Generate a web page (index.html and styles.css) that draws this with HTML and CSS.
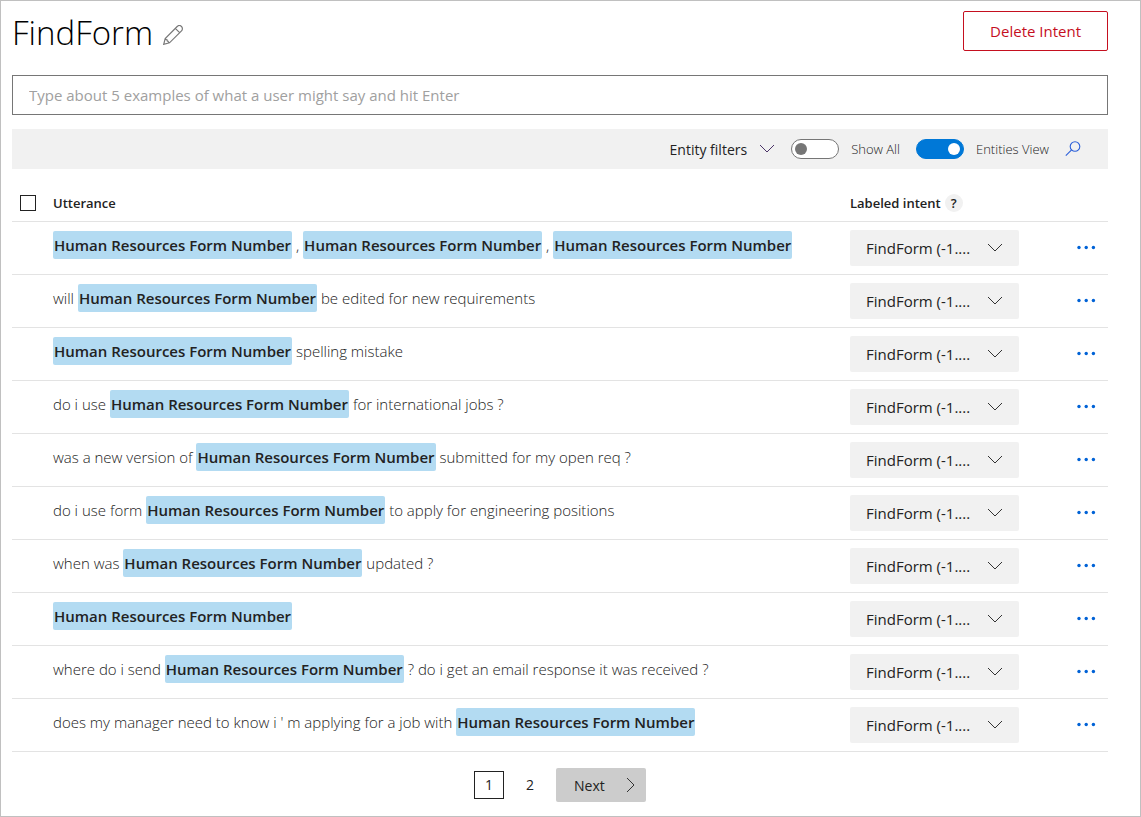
FILE: index.html
```html
<!DOCTYPE html>
<html lang="en">
<head>
<meta charset="utf-8">
<title>FindForm</title>
<link rel="stylesheet" href="styles.css">
</head>
<body>
<svg class="sprite" aria-hidden="true">
  <symbol id="chevron" viewBox="0 0 16 16"><path d="M1 4 8 11 15 4"/></symbol>
  <symbol id="dots" viewBox="0 0 20 6"><circle cx="2" cy="2.500" r="1.700"/><circle cx="9.200" cy="2.500" r="1.700"/><circle cx="16.400" cy="2.500" r="1.700"/></symbol>
</svg>
<main class="page">
  <header class="header">
    <h1 class="title">FindForm</h1>
    <button class="icon-button" type="button" aria-label="Rename intent">
      <svg class="pencil" viewBox="0 0 20 20"><path d="M.7 19.300 2.200 13.500 14.200 1.500A2.600 2.600 0 0 1 18.500 5.800L6.500 17.800ZM2.200 13.500 Q3 15 4 14.900 Q4 16.300 5.100 16.300 Q5.200 17.500 6.500 17.800M12.300 3.400 16.600 7.700"/></svg>
    </button>
    <button class="delete" type="button">Delete Intent</button>
  </header>
  <input class="example" type="text" aria-label="Example utterance" placeholder="Type about 5 examples of what a user might say and hit Enter">
  <div class="toolbar">
    <button class="filters" type="button">Entity filters <svg class="chevron chevron-purple"><use href="#chevron"/></svg></button>
    <label class="switch"><input class="toggle" type="checkbox">Show All</label>
    <label class="switch"><input class="toggle" type="checkbox" checked>Entities View</label>
    <button class="icon-button" type="button" aria-label="Search">
      <svg class="search" viewBox="0 0 16 16"><circle cx="10" cy="5.500" r="4.800"/><path d="M6.600 8.900.8 14.700"/></svg>
    </button>
  </div>
  <table class="utterances">
    <thead>
      <tr>
        <th class="col-check"><input class="check" type="checkbox" aria-label="Select all utterances"></th>
        <th class="col-utterance">Utterance</th>
        <th class="col-intent"><span class="intent-head">Labeled intent <button class="help" type="button">?</button></span></th>
        <th class="col-more"></th>
      </tr>
    </thead>
    <tbody id="rows"></tbody>
  </table>
  <nav class="pager" aria-label="Pages">
    <a class="page-link current" href="#1" aria-current="page">1</a>
    <a class="page-link" href="#2">2</a>
    <button class="next" type="button">Next <svg class="chevron chevron-right"><use href="#chevron"/></svg></button>
  </nav>
</main>
<script src="rows.js"></script>
</body>
</html>
```
FILE: styles.css
```css
* { box-sizing: border-box; }
body { margin: 0; font-family: "Open Sans", "Noto Sans", sans-serif; font-size: 15px; color: #222; background: #fff; }
button, input, select { font: inherit; color: inherit; margin: 0; }
button { background: none; border: 0; padding: 0; cursor: pointer; }
.sprite { display: none; }
.page { min-height: 100vh; border: 1px solid #c0c0c0; padding: 10px 32px 14px 11px; }
.header { display: flex; align-items: center; gap: 10px; }
.title { margin: 0; padding-top: 4px; font-size: 33px; line-height: 36px; font-weight: 300; color: #000; }
.icon-button { display: flex; }
.header .icon-button { padding-top: 8px; }
.pencil { width: 20px; height: 20px; fill: none; stroke: #777; stroke-width: 1.2; }
.delete { margin-left: auto; height: 40px; padding: 0 26px; border: 1px solid #c50f1f; border-radius: 2px; color: #c50f1f; }
.example { display: block; width: 100%; height: 40px; margin-top: 24px; padding: 0 16px; border: 1px solid #767676; }
.example::placeholder { color: #a0a0a0; opacity: 1; }
.toolbar { display: flex; justify-content: flex-end; align-items: center; height: 40px; margin-top: 14px; padding-right: 27px; gap: 16px; background: #f1f1f1; }
.filters { display: flex; align-items: center; gap: 12px; font-size: 14px; }
.chevron { width: 16px; height: 16px; fill: none; stroke: #333; stroke-width: 1; }
.chevron-purple { stroke: #4b3468; }
.switch { display: flex; align-items: center; gap: 12px; font-size: 13px; font-weight: 300; }
.toggle { appearance: none; display: flex; align-items: center; width: 48px; height: 20px; padding: 0 3px; border: 1px solid #767676; border-radius: 10px; background: #fff; }
.toggle::before { content: ""; width: 12px; height: 12px; border-radius: 50%; background: #767676; }
.toggle:checked { justify-content: flex-end; border-color: #0078d7; background: #0078d7; }
.toggle:checked::before { background: #fff; }
.search { width: 16px; height: 16px; fill: none; stroke: #2b5fd9; stroke-width: 1.1; }
.utterances { width: 100%; border-collapse: separate; border-spacing: 0; table-layout: fixed; }
.utterances th { height: 53px; padding: 16px 0 0; border-bottom: 1px solid #e3e3e3; text-align: left; font-size: 13px; font-weight: 600; }
.utterances td { height: 53px; padding: 0; border-bottom: 1px solid #e3e3e3; }
.col-check { width: 41px; }
.col-intent { width: 227px; }
.col-more { width: 31px; }
.check { appearance: none; display: block; width: 16px; height: 16px; margin-left: 8px; border: 1px solid #222; }
.intent-head { display: flex; align-items: center; gap: 4px; }
.help { width: 18px; height: 18px; border-radius: 50%; background: #f1f1f1; font-size: 13px; line-height: 18px; font-weight: 600; }
.utterances .utterance { padding: 9px 0; vertical-align: top; line-height: 28px; font-weight: 300; }
.entity { display: inline-block; padding: 0 1px; border-radius: 2px; background: #b3dbf2; font-weight: 600; }
.intent { display: grid; width: 169px; align-items: center; }
.intent > * { grid-area: 1 / 1; }
.intent-select { appearance: none; width: 100%; height: 36px; padding: 0 32px 0 16px; border: 0; border-radius: 2px; background: #f1f1f1; }
.intent .chevron { justify-self: end; margin-right: 16px; pointer-events: none; }
.more { display: flex; align-items: center; height: 20px; }
.dots { width: 20px; height: 6px; fill: #0062d6; }
.pager { display: flex; justify-content: center; align-items: center; gap: 11px; margin-top: 16px; font-size: 14px; }
.page-link { width: 30px; height: 28px; line-height: 26px; border: 1px solid transparent; text-align: center; text-decoration: none; color: #222; }
.current { border-color: #222; }
.next { display: flex; align-items: center; justify-content: space-between; width: 90px; height: 34px; padding: 0 7px 0 18px; border-radius: 2px; background: #ccc; }
.chevron-right { transform: rotate(-90deg); }
```
FILE: rows.js
```js
const utterances = [
  "{} , {} , {}",
  "will {} be edited for new requirements",
  "{} spelling mistake",
  "do i use {} for international jobs ?",
  "was a new version of {} submitted for my open req ?",
  "do i use form {} to apply for engineering positions",
  "when was {} updated ?",
  "{}",
  "where do i send {} ? do i get an email response it was received ?",
  "does my manager need to know i ' m applying for a job with {}"
];
const entity = '<span class="entity">Human Resources Form Number</span>';
document.getElementById("rows").innerHTML = utterances.map((text) => `
  <tr>
    <td></td>
    <td class="utterance">${text.replaceAll("{}", entity)}</td>
    <td><div class="intent"><select class="intent-select" aria-label="Labeled intent"><option>FindForm (-1....</option></select><svg class="chevron"><use href="#chevron"/></svg></div></td>
    <td><button class="more" type="button" aria-label="More actions"><svg class="dots"><use href="#dots"/></svg></button></td>
  </tr>`).join("");
```
